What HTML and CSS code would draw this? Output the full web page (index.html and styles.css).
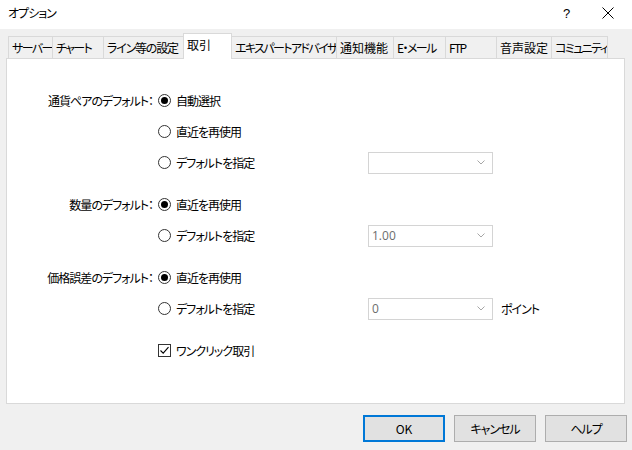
FILE: index.html
```html
<!DOCTYPE html>
<html lang="ja">
<head>
<meta charset="utf-8">
<link rel="stylesheet" href="styles.css">
</head>
<body>
<div class="window">
  <div class="titlebar">
    <span class="title">オプション</span>
    <div class="controls">
      <span class="help">?</span>
      <svg class="close" width="12" height="12" viewBox="0 0 12 12"><path d="M0.5 0.5 L11.5 11.5 M11.5 0.5 L0.5 11.5" stroke="#000" stroke-width="1" fill="none"/></svg>
    </div>
  </div>
  <div class="tabs">
    <div class="tab t1">サーバー</div>
    <div class="tab t2">チャート</div>
    <div class="tab t3">ライン等の設定</div>
    <div class="tab t4 active">取引</div>
    <div class="tab t5">エキスパートアドバイザ</div>
    <div class="tab t6">通知機能</div>
    <div class="tab t7">E・メール</div>
    <div class="tab t8">FTP</div>
    <div class="tab t9">音声設定</div>
    <div class="tab t10">コミュニティ</div>
  </div>
  <div class="panel">
    <div class="group">
      <div class="row">
        <div class="label">通貨ペアのデフォルト：</div>
        <div class="opt"><span class="radio checked"></span>自動選択</div>
      </div>
      <div class="row">
        <div class="label"></div>
        <div class="opt"><span class="radio"></span>直近を再使用</div>
      </div>
      <div class="row">
        <div class="label"></div>
        <div class="opt"><span class="radio"></span>デフォルトを指定</div>
        <div class="combo"><span class="val"></span><svg class="chev" width="8" height="5" viewBox="0 0 8 5"><path d="M0.5 0.5 L4 4 L7.5 0.5" stroke="#a6a6a6" stroke-width="1" fill="none"/></svg></div>
      </div>
    </div>
    <div class="group">
      <div class="row">
        <div class="label">数量のデフォルト：</div>
        <div class="opt"><span class="radio checked"></span>直近を再使用</div>
      </div>
      <div class="row">
        <div class="label"></div>
        <div class="opt"><span class="radio"></span>デフォルトを指定</div>
        <div class="combo"><span class="val">1.00</span><svg class="chev" width="8" height="5" viewBox="0 0 8 5"><path d="M0.5 0.5 L4 4 L7.5 0.5" stroke="#a6a6a6" stroke-width="1" fill="none"/></svg></div>
      </div>
    </div>
    <div class="group">
      <div class="row">
        <div class="label">価格誤差のデフォルト：</div>
        <div class="opt"><span class="radio checked"></span>直近を再使用</div>
      </div>
      <div class="row">
        <div class="label"></div>
        <div class="opt"><span class="radio"></span>デフォルトを指定</div>
        <div class="combo"><span class="val">0</span><svg class="chev" width="8" height="5" viewBox="0 0 8 5"><path d="M0.5 0.5 L4 4 L7.5 0.5" stroke="#a6a6a6" stroke-width="1" fill="none"/></svg></div>
        <div class="unit">ポイント</div>
      </div>
    </div>
    <div class="group">
      <div class="row">
        <div class="label"></div>
        <div class="opt"><span class="check"><svg width="11" height="11" viewBox="0 0 11 11"><path d="M1.5 5.5 L4.2 8.2 L9.5 2.2" stroke="#000" stroke-width="1.1" fill="none"/></svg></span>ワンクリック取引</div>
      </div>
    </div>
  </div>
  <div class="buttons">
    <button class="btn default">OK</button>
    <button class="btn">キャンセル</button>
    <button class="btn">ヘルプ</button>
  </div>
</div>
</body>
</html>
```
FILE: styles.css
```css
html, body {
  margin: 0;
  padding: 0;
}
body {
  width: 632px;
  height: 450px;
  overflow: hidden;
  background: #f0f0f0;
  font-family: "Noto Sans CJK JP", "Noto Sans", sans-serif;
  font-size: 12px;
  color: #000;
  font-feature-settings: "palt";
  letter-spacing: -1px;
}
.window {
  width: 632px;
  height: 450px;
}
.titlebar {
  height: 29px;
  background: #fff;
  display: flex;
  align-items: center;
  justify-content: space-between;
  padding-left: 8px;
  box-sizing: border-box;
}
.title {
  font-size: 12px;
  margin-top: -4px;
}
.controls {
  display: flex;
  align-items: center;
  margin-top: -3px;
}
.help {
  font-family: "Liberation Sans", sans-serif;
  font-size: 13px;
  letter-spacing: 0;
  width: 10px;
  margin-right: 29px;
}
.close {
  margin-right: 18px;
}
.tabs {
  display: flex;
  align-items: flex-end;
  height: 25px;
  margin-top: 4px;
  padding-left: 8px;
}
.tab {
  height: 22px;
  box-sizing: border-box;
  border: 1px solid #d9d9d9;
  border-bottom: none;
  margin-right: -1px;
  padding-left: 3px;
  line-height: 21px;
  white-space: nowrap;
  overflow: hidden;
  background: #f0f0f0;
  letter-spacing: -1.6px;
}
.t1 { width: 45px; }
.t2 { width: 52px; }
.t3 { width: 81px; }
.t4 { width: 49px; }
.t5 { width: 106px; }
.t6 { width: 58px; }
.t7 { width: 53px; }
.t8 { width: 52px; }
.t9 { width: 56px; }
.t10 { width: 57px; }
.t6, .t9, .t4 { letter-spacing: 0; }
.t3 { letter-spacing: -1.2px; }
.tab.active {
  height: 26px;
  background: #fff;
  position: relative;
  z-index: 1;
  margin-bottom: -1px;
  line-height: 22px;
  padding-bottom: 4px;
}
.panel {
  margin-left: 6px;
  width: 619px;
  height: 346px;
  box-sizing: border-box;
  border: 1px solid #d9d9d9;
  background: #fff;
  padding-top: 26px;
  display: flex;
  flex-direction: column;
  gap: 11px;
}
.row {
  display: flex;
  align-items: center;
  height: 31px;
}
.label {
  width: 146px;
  padding-right: 3px;
  text-align: right;
  flex: none;
}
.opt {
  width: 210px;
  flex: none;
  display: flex;
  align-items: center;
  padding-left: 2px;
}
.radio {
  width: 13px;
  height: 13px;
  box-sizing: border-box;
  border: 1px solid #333;
  border-radius: 50%;
  margin-right: 5px;
  display: flex;
  align-items: center;
  justify-content: center;
  flex: none;
}
.radio.checked::after {
  content: "";
  width: 7px;
  height: 7px;
  border-radius: 50%;
  background: #000;
}
.check {
  width: 13px;
  height: 13px;
  box-sizing: border-box;
  border: 1px solid #333;
  margin-right: 5px;
  display: flex;
  align-items: center;
  justify-content: center;
  flex: none;
}
.combo {
  width: 125px;
  height: 22px;
  box-sizing: border-box;
  border: 1px solid #d4d4d4;
  background: #fff;
  display: flex;
  align-items: center;
  justify-content: space-between;
  padding: 0 7px 0 3px;
  font-family: "Open Sans", "Noto Sans", sans-serif;
  font-size: 12px;
  letter-spacing: 0;
  color: #6d6d6d;
  flex: none;
}
.unit {
  margin-left: 8px;
}
.buttons {
  display: flex;
  justify-content: flex-end;
  gap: 9px;
  padding-right: 5px;
  margin-top: 11px;
}
.btn {
  width: 82px;
  height: 27px;
  box-sizing: border-box;
  border: 1px solid #adadad;
  background: #e1e1e1;
  font-family: "Noto Sans CJK JP", "Noto Sans", sans-serif;
  font-size: 12px;
  font-feature-settings: "palt";
  letter-spacing: -1px;
  color: #000;
  padding: 0;
}
.btn.default {
  border: 1px solid #0078d7;
  box-shadow: inset 0 0 0 1px #0078d7;
  letter-spacing: 0;
}
```
